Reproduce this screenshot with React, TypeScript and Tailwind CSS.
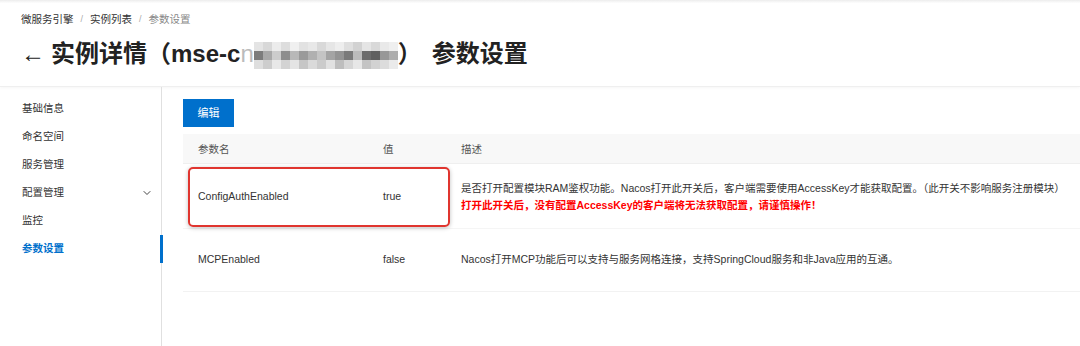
import {ChevronDown} from "lucide-react";

const font = {fontFamily: '"Liberation Sans", "Noto Sans CJK SC", sans-serif'};

const mosaic = [
    "bg-[#e4e4e4]", "bg-[#d8d8d8]", "bg-[#ececec]", "bg-[#dddddd]", "bg-[#f0f0f0]", "bg-[#e2e2e2]", "bg-[#e8e8e8]", "bg-[#d9d9d9]",
    "bg-[#e6e6e6]", "bg-[#eeeeee]", "bg-[#dfdfdf]", "bg-[#d2d2d2]", "bg-[#e5e5e5]", "bg-[#d9d9d9]", "bg-[#e9e9e9]", "bg-[#efefef]",
    "bg-[#7c7c7c]", "bg-[#a8a8a8]", "bg-[#cccccc]", "bg-[#8e8e8e]", "bg-[#b8b8b8]", "bg-[#9a9a9a]", "bg-[#b0b0b0]", "bg-[#c4c4c4]",
    "bg-[#a4a4a4]", "bg-[#949494]", "bg-[#7a7a7a]", "bg-[#bcbcbc]", "bg-[#6c6c6c]", "bg-[#606060]", "bg-[#989898]", "bg-[#adadad]",
    "bg-[#dedede]", "bg-[#cdcdcd]", "bg-[#e8e8e8]", "bg-[#d3d3d3]", "bg-[#e4e4e4]", "bg-[#c6c6c6]", "bg-[#dadada]", "bg-[#cbcbcb]",
    "bg-[#e1e1e1]", "bg-[#bebebe]", "bg-[#d6d6d6]", "bg-[#e7e7e7]", "bg-[#c4c4c4]", "bg-[#d2d2d2]", "bg-[#dcdcdc]", "bg-[#eaeaea]",
];

const menu = ["基础信息", "命名空间", "服务管理", "配置管理", "监控", "参数设置"];

export default function App() {
    return (
        <div className='w-[1080px] h-[346px] bg-white overflow-hidden text-[#333]' style={font}>
            <div className='h-[3px] bg-gradient-to-b from-[#ececec] to-white'/>
            {/*header*/}
            <div className='h-[84px] pl-[21px] border-b border-[#efefef] shadow-[0_1px_3px_rgba(0,0,0,0.04)]'>
                <div className='flex items-center h-[30px] pt-[3px] text-[10.5px] text-[#333]'>
                    <span>微服务引擎</span>
                    <span className='mx-[7px] text-[#aaa] text-[9px]'>/</span>
                    <span>实例列表</span>
                    <span className='mx-[7px] text-[#aaa] text-[9px]'>/</span>
                    <span className='text-[#888]'>参数设置</span>
                </div>
                <div className='flex items-center h-[42px] text-[24px] font-semibold text-[#222]'>
                    <span className='mr-[6px] font-normal'>←</span>
                    <span>实例详情（mse-c</span>
                    <span className='text-[#bbb] font-normal'>n</span>
                    <div className='grid grid-cols-[repeat(16,9px)] grid-rows-[repeat(3,9px)] mt-[2px]'>
                        {mosaic.map((c, i) => <div key={i} className={c}/>)}
                    </div>
                    <span>）</span>
                    <span className='ml-[10px]'>参数设置</span>
                </div>
            </div>

            <div className='flex h-[259px]'>
                {/*sidebar*/}
                <div className='w-[162px] shrink-0 border-r border-[#e0e0e0] pt-[8px]'>
                    {menu.map((m, i) => (
                        <div key={m}
                             className={i === 5
                                 ? 'relative flex items-center h-[28px] pl-[22px] text-[10.5px] text-[#0070cc] font-semibold'
                                 : 'flex items-center justify-between h-[28px] pl-[22px] pr-[8px] text-[10.5px] text-[#333]'}>
                            <span>{m}</span>
                            {i === 3 && <ChevronDown size={12} strokeWidth={2} className='text-[#444]'/>}
                            {i === 5 && <span className='absolute right-[-2px] top-0 w-[3px] h-[28px] bg-[#0070cc]'/>}
                        </div>
                    ))}
                </div>

                {/*content*/}
                <div className='flex-1 pl-[21px] pt-[12px]'>
                    <button className='w-[51px] h-[28px] bg-[#0070cc] text-white text-[11px]'>编辑</button>
                    <div className='mt-[7px] w-[1000px] text-[10.5px]'>
                        <div className='flex items-center h-[30px] pt-[2px] bg-[#f8f8f8] border-b border-[#efefef] text-[#555]'>
                            <div className='w-[185px] pl-[15px]'>参数名</div>
                            <div className='w-[78px] pl-[15px]'>值</div>
                            <div className='pl-[15px]'>描述</div>
                        </div>
                        <div className='relative flex items-center h-[65px] pt-[2px] border-b border-[#f5f5f5]'>
                            <div className='w-[185px] pl-[15px]'>ConfigAuthEnabled</div>
                            <div className='w-[78px] pl-[15px]'>true</div>
                            <div className='pl-[15px] leading-[17px] whitespace-nowrap'>
                                <div>是否打开配置模块RAM鉴权功能。Nacos打开此开关后，客户端需要使用AccessKey才能获取配置。（此开关不影响服务注册模块）</div>
                                <div className='text-[#f00] font-bold'>打开此开关后，没有配置AccessKey的客户端将无法获取配置，请谨慎操作！</div>
                            </div>
                            <div className='absolute left-[5px] top-[3px] w-[262px] h-[60px] border-[2.5px] border-[#e0352f] rounded-[5px] shadow-[0_1px_4px_rgba(0,0,0,0.25)]'/>
                        </div>
                        <div className='flex items-center h-[63px] border-b border-[#f2f2f2]'>
                            <div className='w-[185px] pl-[15px]'>MCPEnabled</div>
                            <div className='w-[78px] pl-[15px]'>false</div>
                            <div className='pl-[15px]'>Nacos打开MCP功能后可以支持与服务网格连接，支持SpringCloud服务和非Java应用的互通。</div>
                        </div>
                    </div>
                </div>
            </div>
        </div>
    );
}
